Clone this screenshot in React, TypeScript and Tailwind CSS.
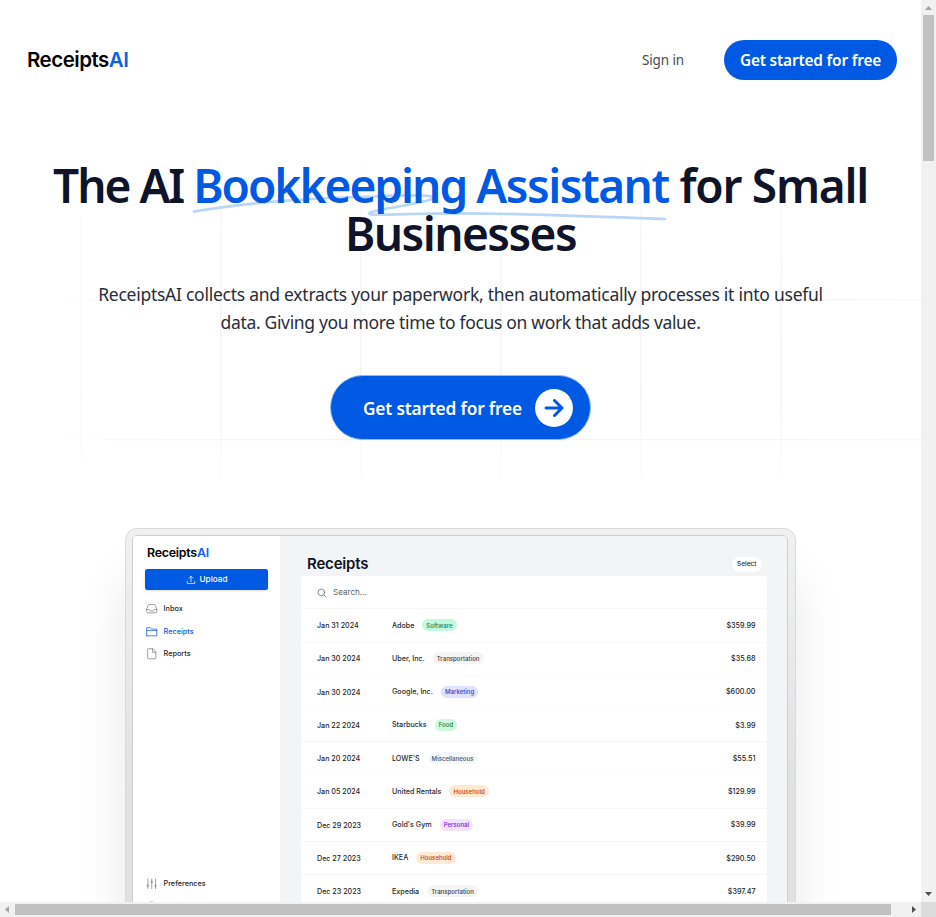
import type { ReactNode } from "react";

const rows = [
  { date: "Jan 31 2024", name: "Adobe", tag: "Software", tone: "bg-[#c2f7e0] text-[#16805c]", amount: "$359.99", line: "border-[#fafafa]" },
  { date: "Jan 30 2024", name: "Uber, Inc.", tag: "Transportation", tone: "bg-[#f4f4f5] text-[#3f3f46]", amount: "$35.68", line: "border-[#fcfcfc]" },
  { date: "Jan 30 2024", name: "Google, Inc.", tag: "Marketing", tone: "bg-[#dfe1fd] text-[#4338ca]", amount: "$600.00", line: "border-[#fdfdfd]" },
  { date: "Jan 22 2024", name: "Starbucks", tag: "Food", tone: "bg-[#cdfadf] text-[#16803c]", amount: "$3.99", line: "border-[#f5f5f5]" },
  { date: "Jan 20 2024", name: "LOWE'S", tag: "Miscellaneous", tone: "bg-[#f6f7f9] text-[#4b5563]", amount: "$55.51", line: "border-[#fcfcfc]" },
  { date: "Jan 05 2024", name: "United Rentals", tag: "Household", tone: "bg-[#ffe9d0] text-[#c2410c]", amount: "$129.99", line: "border-[#f5f5f5]" },
  { date: "Dec 29 2023", name: "Gold's Gym", tag: "Personal", tone: "bg-[#f2e4fe] text-[#7e22ce]", amount: "$39.99", line: "border-[#f6f6f6]" },
  { date: "Dec 27 2023", name: "IKEA", tag: "Household", tone: "bg-[#ffe9d5] text-[#c2410c]", amount: "$290.50", line: "border-[#f5f5f5]" },
  { date: "Dec 23 2023", name: "Expedia", tag: "Transportation", tone: "bg-[#f4f4f5] text-[#3f3f46]", amount: "$397.47", line: "border-[#fafafa]" },
];

function GridLines() {
  return (
    <svg className="pointer-events-none absolute inset-0" width="921" height="500" aria-hidden="true">
      <defs>
        <linearGradient id="v" gradientUnits="userSpaceOnUse" x1="0" x2="0" y1="150" y2="485">
          <stop offset="0" stopColor="#f4f5f6" stopOpacity="0" />
          <stop offset="0.25" stopColor="#f4f5f6" stopOpacity="0.8" />
          <stop offset="0.75" stopColor="#f3f4f5" />
          <stop offset="1" stopColor="#f4f5f6" stopOpacity="0.15" />
        </linearGradient>
        <linearGradient id="h" gradientUnits="userSpaceOnUse" x1="60" x2="921" y1="0" y2="0">
          <stop offset="0" stopColor="#f3f4f6" stopOpacity="0.2" />
          <stop offset="0.2" stopColor="#f3f4f6" />
          <stop offset="0.85" stopColor="#f3f4f6" />
          <stop offset="1" stopColor="#f3f4f6" stopOpacity="0.5" />
        </linearGradient>
      </defs>
      <g fill="url(#v)">
        <rect x="80" y="215" width="1.5" height="250" opacity="0.5" />
        <rect x="220" y="160" width="1.6" height="320" />
        <rect x="360" y="155" width="1.6" height="325" />
        <rect x="500" y="155" width="1.6" height="325" />
        <rect x="640" y="155" width="1.6" height="325" />
        <rect x="780.5" y="160" width="1.6" height="320" />
      </g>
      <g fill="url(#h)">
        <rect x="65" y="299" width="856" height="1.3" />
        <rect x="65" y="439" width="856" height="1.3" />
      </g>
    </svg>
  );
}

function NavItem({ icon, label, active }: { icon: ReactNode; label: string; active?: boolean }) {
  return (
    <div className={`flex h-[22.6px] items-center gap-[6px] pl-[13px] text-[7.3px] font-medium ${active ? "text-[#0f5ce0]" : "text-[#27272a]"}`}>
      <svg viewBox="0 0 24 24" className={`size-[11.5px] ${active ? "text-[#1d62dc]" : "text-[#82868c]"}`} fill="none" stroke="currentColor" strokeWidth="1.6" strokeLinejoin="round" strokeLinecap="round">
        {icon}
      </svg>
      <span className="pt-px">{label}</span>
    </div>
  );
}

function Sidebar() {
  return (
    <aside className="flex w-[147px] shrink-0 flex-col bg-white pt-[9px]">
      <div className="pl-[14px] text-[12.4px] leading-[15px] font-semibold tracking-[-0.24px] text-black">
        Receipts<span className="text-[#0f62e6]">AI</span>
      </div>
      <div className="mt-[9px] ml-[12px] flex h-[21px] w-[123px] items-center justify-center gap-[4px] rounded-[2.5px] bg-[#0059e3] text-[8.2px] font-medium text-white shadow-sm">
        <svg viewBox="0 0 24 24" className="size-[10px]" fill="none" stroke="currentColor" strokeWidth="1.7" strokeLinecap="round" strokeLinejoin="round">
          <path d="M3 15.500v5h18v-5M12 16.500V3m-4.800 4.800L12 3l4.800 4.800" />
        </svg>
        Upload
      </div>
      <nav className="mt-[7.600px]">
        <NavItem label="Inbox" icon={<path d="M1.500 13.500h5l1.500 3h8l1.500-3h5M1.500 13.500v5a2 2 0 0 0 2 2h17a2 2 0 0 0 2-2v-5L19.500 4.500a2 2 0 0 0-1.800-1.200H6.300a2 2 0 0 0-1.800 1.200z" />} />
        <NavItem active label="Receipts" icon={<path d="M1.500 9.500h21M1.500 20.500v-17h7l2.500 3h11.500v14h-21z" />} />
        <NavItem label="Reports" icon={<path d="M14 1.500H5a1.500 1.500 0 0 0-1.500 1.500v18A1.500 1.500 0 0 0 5 22.500h14a1.500 1.500 0 0 0 1.500-1.500V8.500zM13.500 1.500V9h7" />} />
      </nav>
      <div className="mt-[207px]">
        <NavItem label="Preferences" icon={<path d="M4 2v12m0 4v4M2 16.500h4M12 2v4m0 4v12M10 8.500h4M20 2v12m0 4v4M18 16.500h4M4 14v4M12 6v4M20 14v4" />} />
        <svg viewBox="0 0 24 24" className="mt-[6px] ml-[13px] size-[11px] text-[#82868c]" fill="none" stroke="currentColor" strokeWidth="1.6">
          <circle cx="12" cy="12" r="10" />
        </svg>
      </div>
    </aside>
  );
}

function Ledger() {
  return (
    <section className="min-w-0 flex-1 bg-[#f3f4f6] pr-[20px] pl-[21px]">
      <div className="flex h-[39px] items-center justify-between pt-[17px] pr-[5px] pl-[6px]">
        <h2 className="text-[15px] font-semibold tracking-[-0.18px] text-[#101322]">Receipts</h2>
        <span className="flex h-[15px] items-center rounded-full bg-white px-[5.500px] pt-px text-[6.5px] font-medium text-[#27272a]">Select</span>
      </div>
      <div className="mt-px rounded-t-[3px] bg-white">
        <div className="flex h-[33.250px] items-center gap-[6px] border-b border-[#f7f7f7] pt-px pl-[16px] text-[8.2px] tracking-[-0.05px] text-[#5f6368]">
          <svg viewBox="0 0 24 24" className="size-[10px]" fill="none" stroke="currentColor" strokeWidth="1.8" strokeLinecap="round">
            <circle cx="10.500" cy="10.500" r="8" />
            <path d="m16.500 16.500 5 5" />
          </svg>
          Search...
        </div>
        {rows.map((r) => (
          <div key={r.date + r.name} className={`flex h-[33.250px] items-center border-b pt-px pr-[11.500px] pl-[16px] text-[7.150px] font-medium whitespace-nowrap text-[#27272a] ${r.line}`}>
            <span className="w-[75px] pt-px">{r.date}</span>
            <span>{r.name}</span>
            <span className={`mb-[1.500px] ml-[8px] flex h-[12px] items-center rounded-full px-[4px] text-[6.1px] ${r.tone}`}>{r.tag}</span>
            <span className="ml-auto pt-px text-[7.2px]">{r.amount}</span>
          </div>
        ))}
      </div>
    </section>
  );
}

function Page() {
  return (
    <div className="relative h-[902px] w-[921px] overflow-hidden bg-white">
      <GridLines />
      <div className="relative">
        <header className="flex h-[120px] items-center pr-[24px] pl-[27px]">
          <div className="font-[Inter] text-[20.5px] font-semibold tracking-[-0.5px] text-black">
            Receipts<span className="text-[#0f62e6]">AI</span>
          </div>
          <a className="mr-[40px] ml-auto pt-px text-[13.5px] tracking-[-0.12px] text-[#454b57]">Sign in</a>
          <button className="h-[40px] w-[173px] rounded-full bg-[#0059e3] pt-px text-[15.4px] font-semibold tracking-[-0.18px] whitespace-nowrap text-white">Get started for free</button>
        </header>

        <h1 className="mt-[41px] text-center text-[46px] leading-[48px] font-semibold whitespace-nowrap text-[#0f1428]">
          <span className="flex justify-center whitespace-pre">
            <span className="tracking-[-2px]">The AI </span>
            <span className="relative text-[#0059e3]">
              <svg className="absolute top-[30px] left-[1px] h-[32px] w-[475px] overflow-visible" viewBox="0 0 475 32" fill="none" aria-hidden="true">
                <path d="M0 20.500C55 11 120 7 180 5.500C215 3.500 242 4.500 241 6.500C234 12 190 17 176 21.500C171 24.500 185 24 215 23C300 21 390 25 471 28" stroke="#b9d6f8" strokeWidth="2.700" strokeLinecap="round" strokeLinejoin="round" />
              </svg>
              <span className="relative tracking-[-2px]">Bookkeeping </span>
              <span className="relative tracking-[-1.450px]">Assistant</span>
            </span>
            <span className="tracking-[-1.250px]"> for Small</span>
          </span>
          <span className="block tracking-[-1.550px]">Businesses</span>
        </h1>

        <p className="mt-[23px] text-center text-[17.5px] leading-[28px] whitespace-nowrap text-[#272d39]">
          <span className="block tracking-[-0.260px]">ReceiptsAI collects and extracts your paperwork, then automatically processes it into useful</span>
          <span className="block tracking-[-0.330px]">data. Giving you more time to focus on work that adds value.</span>
        </p>

        <button className="mx-auto mt-[39px] flex h-[65px] w-[261px] items-center justify-between rounded-full border border-[#8fbcf5] bg-[#0059e3] pt-px pr-[17px] pl-[32px] text-[17.3px] font-semibold tracking-[-0.19px] whitespace-nowrap text-white">
          <span className="pt-px">Get started for free</span>
          <span className="flex size-[38px] items-center justify-center rounded-full bg-white text-[#0059e3]">
            <svg viewBox="0 0 20 18" className="h-[18px] w-[20px]" fill="none" stroke="currentColor" strokeWidth="3" strokeLinecap="round" strokeLinejoin="round">
              <path d="M2 9h16M10.500 1.500 18 9l-7.500 7.500" />
            </svg>
          </span>
        </button>

        <div className="mx-auto mt-[88px] h-[520px] w-[671px] rounded-[12px] border border-[#dadada] bg-linear-to-b from-[#f1f1f1] to-[#e0e1e2] to-50% p-[6px] pr-[7px] shadow-[0_50px_50px_rgba(0,0,0,0.09)]">
          <div className="flex h-full overflow-hidden rounded-t-[5px] border border-[#cfcfcf] font-[Inter]">
            <Sidebar />
            <Ledger />
          </div>
        </div>
      </div>
    </div>
  );
}

export default function App() {
  return (
    <div className="grid h-[917px] w-[936px] grid-cols-[921px_15px] grid-rows-[902px_15px] overflow-hidden bg-white font-['Noto_Sans',sans-serif]">
      <Page />
      <div className="flex flex-col items-center bg-[#f1f1f1]">
        <svg width="15" height="15"><path d="M4 10h7L7.500 6z" fill="#a3a3a3" /></svg>
        <div className="h-[146px] w-[11px] bg-[#c1c1c1]" />
        <svg className="mt-auto" width="15" height="15"><path d="M4 5h7L7.500 9z" fill="#505050" /></svg>
      </div>
      <div className="flex items-center bg-[#f1f1f1]">
        <svg width="15" height="15"><path d="M9 4v7L5 7.500z" fill="#a3a3a3" /></svg>
        <div className="h-[11px] w-[876px] bg-[#c1c1c1]" />
        <svg className="ml-auto" width="15" height="15"><path d="M6 4v7l4-3.500z" fill="#505050" /></svg>
      </div>
      <div className="bg-[#dcdcdc]" />
    </div>
  );
}
